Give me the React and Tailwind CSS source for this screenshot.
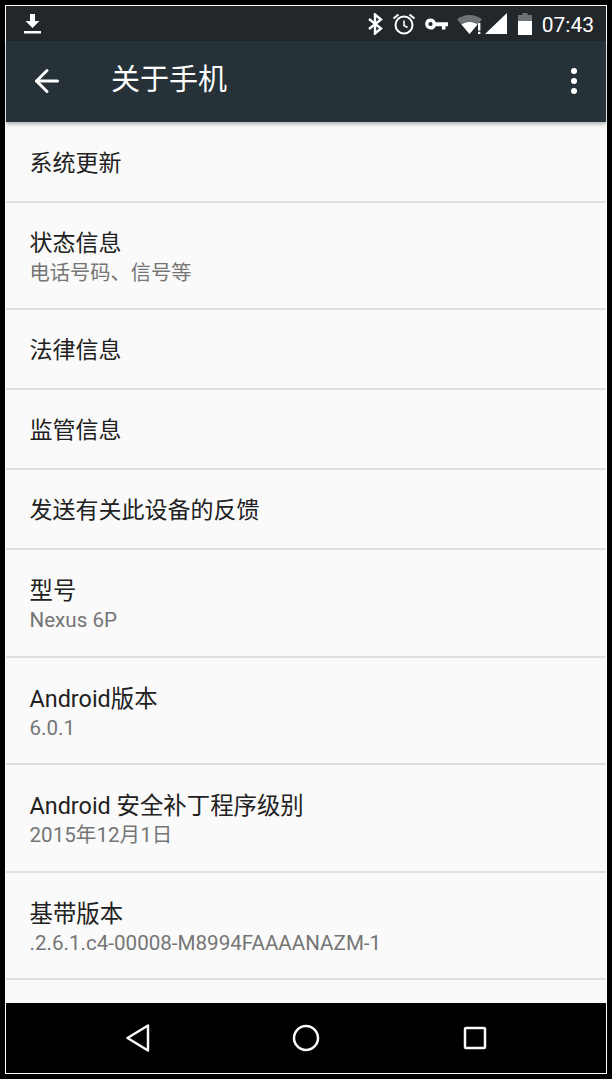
import { ArrowLeft } from 'lucide-react'

// wide: rows with latin text, Roboto runs a bit narrower than the device font
const rows = [
  { title: '系统更新' },
  { title: '状态信息', sub: '电话号码、信号等' },
  { title: '法律信息' },
  { title: '监管信息' },
  { title: '发送有关此设备的反馈' },
  { title: '型号', sub: 'Nexus 6P', wide: true },
  { title: 'Android版本', sub: '6.0.1', wide: true },
  { title: 'Android 安全补丁程序级别', sub: '2015年12月1日', wide: true },
  { title: '基带版本', sub: '.2.6.1.c4-00008-M8994FAAAANAZM-1', wide: true },
]

function StatusIcons() {
  return (
    <div className="flex items-center">
      {/* bluetooth */}
      <svg width="16" height="22" viewBox="0 0 16 22" fill="none" stroke="#fff" strokeWidth="2.4">
        <path d="M2 6l12 9.500-6 5V1.500l6 5L2 16" />
      </svg>
      {/* alarm */}
      <svg width="24" height="24" viewBox="0 0 24 24" fill="none" stroke="#fff" className="ml-[9px]">
        <circle cx="12" cy="13" r="8.500" strokeWidth="2" />
        <path d="M12 8.500V13.500l3.500 2" strokeWidth="1.600" />
        <path d="M1.500 6.500L6.500 2.500M22.500 6.500L17.500 2.500" strokeWidth="2.200" />
      </svg>
      {/* vpn key */}
      <svg width="24" height="14" viewBox="0 0 24 14" fill="#fff" className="ml-[8px]">
        <path fillRule="evenodd" d="M6.500 1.500a5.500 5.500 0 0 1 5.200 3.700H24v4h-2.500V12.500h-3.600V9.200h-6.200a5.500 5.500 0 1 1-5.200-7.700zm0 3.400a2.100 2.100 0 1 0 0 4.200 2.100 2.100 0 0 0 0-4.200z" />
      </svg>
      {/* wifi with alert */}
      <svg width="26" height="22" viewBox="0 0 26 22" className="ml-[9px]">
        <path d="M0 6.500C6 .5 19 .5 25 6.500L12.500 21z" fill="#fff" fillOpacity="0.35" />
        <path d="M4.500 11.500c4.500-3.500 11.500-3.500 16 0L12.500 21z" fill="#fff" />
        <path d="M21 10h2.400v7.500H21zM21 18.800h2.400V21H21z" fill="#fff" />
      </svg>
      {/* signal */}
      <svg width="22" height="21" viewBox="0 0 22 21" className="ml-[2px]">
        <path d="M22 0v21H0z" fill="#fff" />
      </svg>
      {/* battery */}
      <svg width="14" height="22" viewBox="0 0 14 22" className="ml-[11px]">
        <path d="M4.500 0h5v2H14v20H0V2h4.500z" fill="#fff" fillOpacity="0.35" />
        <path d="M0 8h14v14H0z" fill="#fff" />
      </svg>
      <span className="ml-[10px] pt-[4px] text-[21px] text-white">07:43</span>
    </div>
  )
}

export default function App() {
  return (
    <div
      className="h-[1079px] w-[612px] overflow-hidden bg-black pl-[5px] pt-[5px]"
      style={{ fontFamily: 'Roboto, "Noto Sans CJK SC", sans-serif' }}
    >
      <div className="flex h-[1069px] w-[602px] flex-col border border-white">
        {/* status bar */}
        <div className="flex h-[35px] shrink-0 items-center justify-between bg-[#21272b] pl-[18px] pr-[12px]">
          <svg width="17" height="24" viewBox="0 0 17 24" fill="#fff">
            <path d="M6 2h5v7h4.500l-7 7-7-7H6z" />
            <rect x="0" y="19" width="17" height="2.500" />
          </svg>
          <StatusIcons />
        </div>

        {/* action bar */}
        <div className="relative z-10 flex h-[81px] shrink-0 items-center bg-[#263238] pb-[2px] shadow-[0_2px_4px_rgba(0,0,0,0.3)]">
          <ArrowLeft size={36} color="#fff" strokeWidth={2} className="ml-[23px]" />
          <h1 className="ml-[46px] text-[29px] leading-none font-normal text-white">关于手机</h1>
          <div className="mr-[29px] ml-auto flex flex-col gap-[4px]">
            <span className="h-[6px] w-[6px] rounded-full bg-white" />
            <span className="h-[6px] w-[6px] rounded-full bg-white" />
            <span className="h-[6px] w-[6px] rounded-full bg-white" />
          </div>
        </div>

        {/* list */}
        <div className="min-h-0 flex-1 overflow-hidden bg-[#fafafa] pt-[0.5px]">
          {rows.map((row) => (
            <div
              key={row.title}
              className={`flex flex-col border-b-2 border-[#dfdfdf] pl-[23.5px] pt-[24px] ${row.sub ? 'h-[107.5px]' : 'h-[80px]'}`}
            >
              <div className={`leading-[34px] text-[#212121] ${row.wide ? 'text-[23.4px]' : 'text-[23px]'}`}>{row.title}</div>
              {row.sub && (
                <div className={`-mt-[2px] leading-[28px] text-[#757575] ${row.wide ? 'text-[20.6px]' : 'text-[20.25px]'}`}>{row.sub}</div>
              )}
            </div>
          ))}
        </div>

        {/* nav bar */}
        <div className="flex h-[70px] shrink-0 items-center justify-center bg-black">
          <svg width="26" height="30" viewBox="0 0 26 30" fill="none" stroke="#fafafa" strokeWidth="2.500" strokeLinejoin="round">
            <path d="M23 2.500v25L2.500 15z" />
          </svg>
          <svg width="28" height="28" viewBox="0 0 28 28" fill="none" stroke="#fafafa" strokeWidth="2.500" className="ml-[141px]">
            <circle cx="14" cy="14" r="12" />
          </svg>
          <svg width="24" height="24" viewBox="0 0 24 24" fill="none" stroke="#fafafa" strokeWidth="2.500" strokeLinejoin="round" className="ml-[143px]">
            <rect x="2" y="2" width="20" height="20" rx="1" />
          </svg>
        </div>
      </div>
    </div>
  )
}
